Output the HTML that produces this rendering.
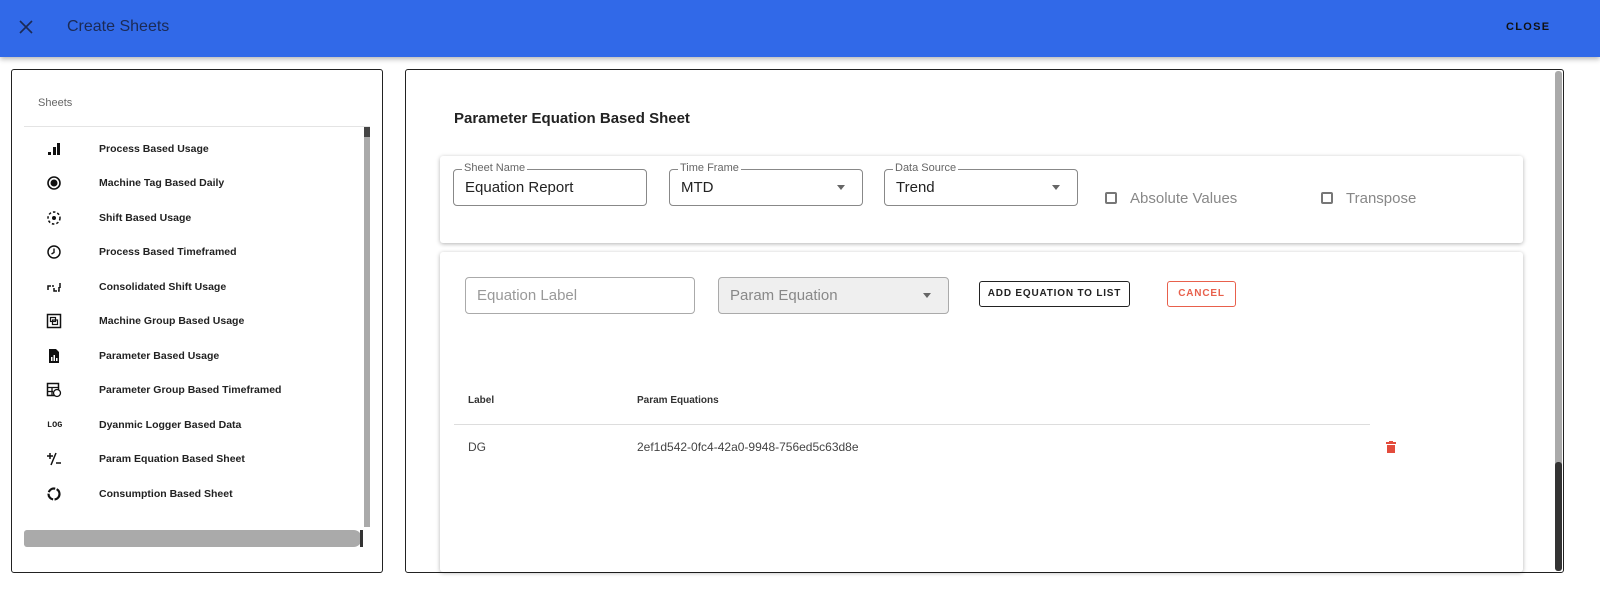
<!DOCTYPE html>
<html><head><meta charset="utf-8"><style>
*{box-sizing:border-box;margin:0;padding:0}
body{width:1600px;height:593px;background:#fff;font-family:"Liberation Sans",sans-serif;position:relative;overflow:hidden;color:#222}
.a{position:absolute}
.hdr{left:0;top:0;width:1600px;height:57px;background:#3169e8;box-shadow:0 2px 5px rgba(0,0,0,.3)}
.panel{border:1px solid #222;border-radius:3px;background:#fff}
.item{position:absolute;left:24px;height:34px;width:330px;font-size:10.5px;font-weight:bold;color:#222}
.item span{position:absolute;left:75px;top:11px}
.item svg{position:absolute;left:22px;top:9px}
.fld{border:1px solid #888;border-radius:4px;background:#fff}
.lbl{position:absolute;top:-8px;left:8px;background:#fff;padding:0 2px;font-size:11px;color:#666}
.val{position:absolute;left:11px;top:9px;font-size:15px;color:#222}
.arr{position:absolute;right:17px;top:15px;width:0;height:0;border-left:4px solid transparent;border-right:4px solid transparent;border-top:5px solid #666}
.card{background:#fff;border-radius:3px;box-shadow:0 1px 4px rgba(0,0,0,.3)}
.cb{width:12px;height:12px;border:2px solid #777;border-radius:2px}
</style></head><body>
<div class="a hdr">
<svg class="a" style="left:19px;top:20px" width="14" height="14" viewBox="0 0 14 14"><path d="M1 1L13 13M13 1L1 13" stroke="#1b2a55" stroke-width="1.6"/></svg>
<div class="a" style="left:67px;top:18px;font-size:16px;color:#1b2a55">Create Sheets</div>
<div class="a" style="left:1506px;top:21px;font-size:11px;font-weight:bold;letter-spacing:1.3px;color:#111">CLOSE</div>
</div>

<div class="a panel" style="left:11px;top:69px;width:372px;height:504px"></div>
<div class="a" style="left:38px;top:97px;font-size:11px;color:#666">Sheets</div>
<div class="a" style="left:24px;top:126px;width:346px;height:1px;background:#e4e4e4"></div>
<div class="a" style="left:364px;top:127px;width:6px;height:400px;background:#aaa"></div>
<div class="a" style="left:364px;top:127px;width:6px;height:10px;background:#444"></div>
<div class="a" style="left:24px;top:530px;width:338px;height:17px;background:#aaa;border-radius:3px 9px 9px 3px"></div>
<div class="a" style="left:360px;top:530px;width:3px;height:17px;background:#333"></div>

<div class="item" style="top:132px"><svg width="16" height="16" viewBox="0 0 16 16"><rect x="2" y="11" width="3" height="3" fill="#111"/><rect x="7" y="6" width="3" height="8" fill="#111"/><rect x="11" y="2" width="3" height="12" fill="#111"/></svg><span>Process Based Usage</span></div>
<div class="item" style="top:166px"><svg width="16" height="16" viewBox="0 0 16 16"><circle cx="8" cy="8" r="6" fill="none" stroke="#111" stroke-width="1.6"/><circle cx="8" cy="8" r="3.5" fill="#111"/></svg><span>Machine Tag Based Daily</span></div>
<div class="item" style="top:201px"><svg width="16" height="16" viewBox="0 0 16 16"><circle cx="8" cy="8" r="6" fill="none" stroke="#111" stroke-width="1.5" stroke-dasharray="2.5 2"/><circle cx="8" cy="8" r="2" fill="#111"/></svg><span>Shift Based Usage</span></div>
<div class="item" style="top:235px"><svg width="16" height="16" viewBox="0 0 16 16"><circle cx="8" cy="8" r="6" fill="none" stroke="#111" stroke-width="1.5"/><path d="M8 4.5V8.5L5.5 10" stroke="#111" stroke-width="1.4" fill="none"/></svg><span>Process Based Timeframed</span></div>
<div class="item" style="top:270px"><svg width="16" height="16" viewBox="0 0 16 16"><path d="M2 11V7H5M6 7H8M8 9V12H11M12 12H13V8M14 4V9" stroke="#111" stroke-width="1.5" fill="none"/></svg><span>Consolidated Shift Usage</span></div>
<div class="item" style="top:304px"><svg width="16" height="16" viewBox="0 0 16 16"><rect x="1.5" y="1.5" width="13" height="13" fill="none" stroke="#111" stroke-width="1.5"/><rect x="4.5" y="4.5" width="5" height="4" fill="none" stroke="#111" stroke-width="1.2"/><rect x="6.5" y="7" width="5" height="4.5" fill="none" stroke="#111" stroke-width="1.2"/></svg><span>Machine Group Based Usage</span></div>
<div class="item" style="top:339px"><svg width="16" height="16" viewBox="0 0 16 16"><path d="M3 1H10L13 4V15H3Z" fill="#111"/><rect x="5" y="9" width="1.5" height="4" fill="#fff"/><rect x="7.5" y="7" width="1.5" height="6" fill="#fff"/><rect x="10" y="10" width="1.5" height="3" fill="#fff"/></svg><span>Parameter Based Usage</span></div>
<div class="item" style="top:373px"><svg width="16" height="16" viewBox="0 0 16 16"><rect x="1.5" y="1.5" width="11" height="12" fill="none" stroke="#111" stroke-width="1.5"/><path d="M1.5 5.5H12.5M1.5 9.5H7M6 5.5V13.5" stroke="#111" stroke-width="1.3"/><circle cx="11" cy="11" r="3.5" fill="#fff" stroke="#111" stroke-width="1.3"/></svg><span>Parameter Group Based Timeframed</span></div>
<div class="item" style="top:408px"><span style="left:23px;top:12px;font-size:8.5px;font-weight:bold;font-family:'Liberation Mono',monospace">LOG</span><span>Dyanmic Logger Based Data</span></div>
<div class="item" style="top:442px"><svg width="16" height="16" viewBox="0 0 16 16"><path d="M1 5H7M4 2V8M10 2L5 14M10 12H15" stroke="#111" stroke-width="1.5"/></svg><span>Param Equation Based Sheet</span></div>
<div class="item" style="top:477px"><svg width="16" height="16" viewBox="0 0 16 16"><circle cx="8" cy="8" r="5.5" fill="none" stroke="#111" stroke-width="2.2" stroke-dasharray="8 1.5"/></svg><span>Consumption Based Sheet</span></div>

<div class="a panel" style="left:405px;top:69px;width:1159px;height:504px"></div>
<div class="a" style="left:1555px;top:71px;width:7px;height:500px;background:#aaa;border-radius:3px"></div>
<div class="a" style="left:1555px;top:462px;width:7px;height:109px;background:#333;border-radius:3px"></div>
<div class="a" style="left:454px;top:110px;font-size:15px;font-weight:bold;color:#222">Parameter Equation Based Sheet</div>

<div class="a card" style="left:440px;top:156px;width:1083px;height:87px"></div>
<div class="a fld" style="left:453px;top:169px;width:194px;height:37px"><div class="lbl">Sheet Name</div><div class="val">Equation Report</div></div>
<div class="a fld" style="left:669px;top:169px;width:194px;height:37px"><div class="lbl">Time Frame</div><div class="val">MTD</div><div class="arr"></div></div>
<div class="a fld" style="left:884px;top:169px;width:194px;height:37px"><div class="lbl">Data Source</div><div class="val">Trend</div><div class="arr"></div></div>
<div class="a cb" style="left:1105px;top:192px"></div>
<div class="a" style="left:1130px;top:190px;font-size:15px;color:#888">Absolute Values</div>
<div class="a cb" style="left:1321px;top:192px"></div>
<div class="a" style="left:1346px;top:190px;font-size:15px;color:#888">Transpose</div>

<div class="a card" style="left:440px;top:252px;width:1083px;height:320px"></div>
<div class="a fld" style="left:465px;top:277px;width:230px;height:37px;border-color:#aaa"><div class="val" style="color:#999">Equation Label</div></div>
<div class="a fld" style="left:718px;top:277px;width:231px;height:37px;background:#efefef;border-color:#aaa"><div class="val" style="color:#888">Param Equation</div><div class="arr"></div></div>
<div class="a" style="left:979px;top:281px;width:151px;height:26px;border:1px solid #222;border-radius:3px;font-size:10px;font-weight:bold;letter-spacing:.8px;text-align:center;line-height:24px">ADD EQUATION TO LIST</div>
<div class="a" style="left:1167px;top:281px;width:69px;height:26px;border:1px solid #e8604c;border-radius:3px;font-size:10px;font-weight:bold;letter-spacing:.8px;color:#e8604c;text-align:center;line-height:24px">CANCEL</div>

<div class="a" style="left:468px;top:395px;font-size:10px;font-weight:bold;color:#333">Label</div>
<div class="a" style="left:637px;top:395px;font-size:10px;font-weight:bold;color:#333">Param Equations</div>
<div class="a" style="left:454px;top:424px;width:916px;height:1px;background:#ddd"></div>
<div class="a" style="left:468px;top:440px;font-size:12px;color:#444">DG</div>
<div class="a" style="left:637px;top:440px;font-size:12px;color:#444">2ef1d542-0fc4-42a0-9948-756ed5c63d8e</div>
<svg class="a" style="left:1385px;top:441px" width="12" height="13" viewBox="0 0 12 13"><path d="M4 0H8V1H11V3H1V1H4Z M2 4H10V12H2Z" fill="#e34c3c"/></svg>
</body></html>
